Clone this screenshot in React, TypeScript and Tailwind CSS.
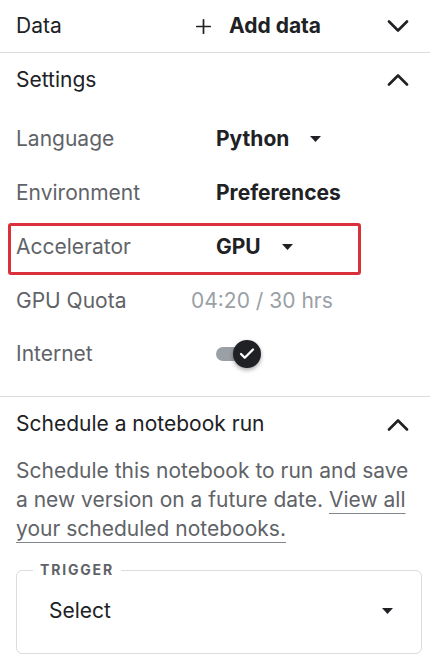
import { Plus, Check } from 'lucide-react'

function Caret({ className = '' }: { className?: string }) {
  return (
    <svg width="11" height="6" viewBox="0 0 11 6" className={className}>
      <path d="M0 0h11L5.5 6z" fill="#202124" />
    </svg>
  )
}

function Chevron({ up = false }: { up?: boolean }) {
  return (
    <svg width="22" height="13" viewBox="0 0 22 13" className="ml-auto mr-[21px]">
      <path
        d={up ? 'M2 11.5 11 2.5l9 9' : 'M2 1.5l9 9 9-9'}
        fill="none"
        stroke="#202124"
        strokeWidth="2.6"
        strokeLinecap="round"
        strokeLinejoin="round"
      />
    </svg>
  )
}

function Row({ label, h, children }: { label: string; h: string; children: React.ReactNode }) {
  return (
    <div className={`flex items-center ${h}`}>
      <div className="w-[200px] text-[#5f6368]">{label}</div>
      {children}
    </div>
  )
}

export default function App() {
  return (
    <div
      className="w-[430px] h-[664px] bg-white text-[21px] text-[#202124] overflow-hidden"
      style={{ fontFamily: 'Inter, "Noto Sans", sans-serif' }}
    >
      <div className="flex items-center h-[53px] pl-4 border-b border-[#dadce0]">
        <div className="w-[176px]">Data</div>
        <Plus size={23} strokeWidth={1.8} className="mr-[14px]" />
        <span className="font-bold">Add data</span>
        <Chevron />
      </div>

      <div className="pl-4 border-b border-[#dadce0] pb-[15px]">
        <div className="flex items-center h-[53px]">
          <span>Settings</span>
          <Chevron up />
        </div>
        <div className="mt-[6px]">
          <Row label="Language" h="h-[54px]">
            <span className="font-bold">Python</span>
            <Caret className="ml-[21px]" />
          </Row>
          <Row label="Environment" h="h-[54px]">
            <span className="font-bold">Preferences</span>
          </Row>
          <div className="mt-[3px] -ml-[8px] w-[353px] h-[52px] border-[3px] border-[#d9303c] rounded-[3px] flex items-center pl-[5px] pb-[4px]">
            <div className="w-[200px] text-[#5f6368]">Accelerator</div>
            <span className="font-bold">GPU</span>
            <Caret className="ml-[21px]" />
          </div>
          <Row label="GPU Quota" h="h-[52px]">
            <span className="-ml-[25px] text-[#9aa0a6]">04:20 / 30 hrs</span>
          </Row>
          <Row label="Internet" h="h-[54px]">
            <div className="relative w-[46px] h-[28px] flex items-center">
              <div className="w-[34px] h-[14px] rounded-full bg-[#9aa0a6]" />
              <div className="absolute left-[17px] top-0 w-[28px] h-[28px] rounded-full bg-[#202124] shadow-[0_2px_4px_rgba(0,0,0,0.35)] flex items-center justify-center">
                <Check size={18} strokeWidth={3} color="white" />
              </div>
            </div>
          </Row>
        </div>
      </div>

      <div className="pl-4 pr-[14px]">
        <div className="flex items-center h-[54px] -mr-[14px]">
          <span>Schedule a notebook run</span>
          <Chevron up />
        </div>
        <p className="text-[#5f6368] text-[21px] leading-[29px] mt-[5px]">
          Schedule this notebook to run and save a new version on a future date.{' '}
          <a className="underline underline-offset-[6px] decoration-1 decoration-[#80868b]">
            View all your scheduled notebooks.
          </a>
        </p>
        <fieldset className="mt-[19px] -mr-[6px] border border-[#dadce0] rounded-[6px] px-[16px] h-[92px]">
          <legend className="px-[7px] text-[14px] font-bold tracking-[0.13em] text-[#5f6368] uppercase leading-[16px]">
            Trigger
          </legend>
          <div className="flex items-center h-[68px] -mt-[1px]">
            <span className="ml-[16px]">Select</span>
            <Caret className="ml-auto mr-[12px]" />
          </div>
        </fieldset>
      </div>
    </div>
  )
}
